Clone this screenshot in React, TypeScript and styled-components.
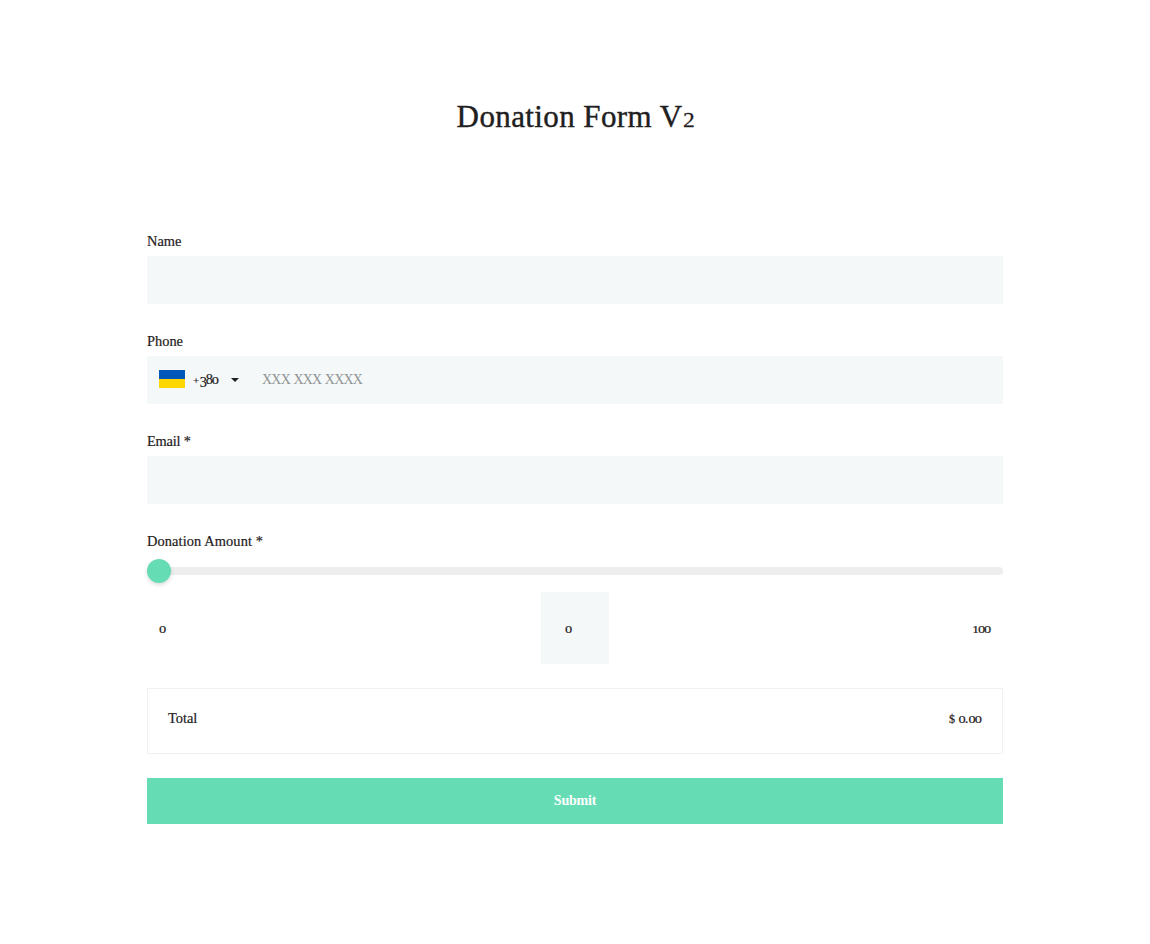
import React from "react";
import styled, { createGlobalStyle } from "styled-components";

const GlobalStyle = createGlobalStyle`
  * { box-sizing: border-box; }
  body {
    margin: 0;
    background: #fff;
    color: #1f2021;
    font-family: "Liberation Serif", "Times New Roman", serif;
    font-size: 14.4px;
    line-height: 20px;
  }
`;

const Page = styled.main`
  width: 856px;
  margin: 0 auto;
  padding-top: 97px;
`;

const Title = styled.h1`
  margin: 0 0 94px;
  padding-left: 2px;
  text-align: center;
  font-size: 31px;
  font-weight: 400;
  line-height: 40px;
  letter-spacing: 0.4px;
  -webkit-text-stroke: 0.4px currentColor;
`;

const Field = styled.section<{ $gap?: number }>`
  display: flex;
  flex-direction: column;
  gap: 5px;
  margin-bottom: ${(p) => p.$gap ?? 27}px;
`;

const Text = styled.span<{ $spacing?: number }>`
  letter-spacing: ${(p) => p.$spacing ?? 0}px;
  -webkit-text-stroke: 0.2px currentColor;
`;

const InputBox = styled.div`
  display: flex;
  align-items: center;
  height: 48px;
  padding: 0 12px;
  background: #f4f8f9;
`;

const Flag = styled.svg`
  display: block;
  width: 26px;
  height: 18px;
  margin: 0 8px 2px 0;
`;

const DialCode = styled.div`
  width: 38px;
  padding-bottom: 2px;
  white-space: nowrap;
`;

const Plus = styled.span`
  margin-right: 1px;
  font-size: 11px;
`;

const Caret = styled.svg`
  display: block;
  width: 8px;
  height: 4px;
  margin-right: 23px;
`;

const Placeholder = styled.span`
  color: #919495;
  font-size: 14px;
  letter-spacing: -0.76px;
  word-spacing: 0.6px;
`;

const SliderRow = styled.div`
  display: flex;
  align-items: center;
  height: 24px;
  margin-top: 3px;
`;

const Track = styled.div`
  display: flex;
  align-items: center;
  width: 100%;
  height: 8px;
  border-radius: 4px;
  background: #eee;
`;

const Thumb = styled.div`
  width: 24px;
  height: 24px;
  border-radius: 50%;
  background: #66dcb5;
  box-shadow: 0 2px 4px rgba(0, 0, 0, 0.14);
`;

const Range = styled.div`
  display: grid;
  grid-template-columns: 1fr 68px 1fr;
  align-items: center;
  height: 72px;
  margin-top: 4px;
  padding: 0 12px;
`;

const RangeEnd = styled.div<{ $align?: string }>`
  padding-bottom: 1px;
  text-align: ${(p) => p.$align ?? "left"};
`;

const Amount = styled.div`
  display: flex;
  align-items: center;
  height: 72px;
  padding: 0 0 1px 24px;
  background: #f4f8f9;
`;

const Total = styled.section`
  display: flex;
  justify-content: space-between;
  height: 66px;
  margin-bottom: 24px;
  padding: 19px 20px;
  border: 1px solid #f1f1f1;
`;

const Currency = styled.span`
  font-size: 12px;
`;

const Submit = styled.button`
  display: block;
  width: 100%;
  height: 46px;
  padding: 0;
  border: 0;
  background: #66dcb5;
  color: #fff;
  font: bold 14px/20px "Liberation Serif", "Times New Roman", serif;
  letter-spacing: -0.2px;
`;

// Old-style figures: 0–2 sit at x-height, 3–5, 7 and 9 drop below the baseline.
const Digit = styled.span<{ $short: boolean; $drop: boolean; $tight?: boolean }>`
  display: inline-block;
  line-height: 1;
  transform-origin: 0 0.837em;
  transform: ${(p) => (p.$short ? "scaleY(0.65)" : p.$drop ? "translateY(0.2em)" : "none")};
  margin-right: ${(p) => (p.$tight ? "-0.06em" : "0")};
`;

const TitleDigit = styled(Digit)`
  margin: 0 -4px 0 1px;
  transform: scale(0.76, 0.68);
`;

const Figures = ({ value, tight }: { value: string; tight?: boolean }) => (
  <>
    {value.split("").map((c, i) =>
      /\d/.test(c) ? (
        <Digit
          key={i}
          $short={"012".includes(c)}
          $drop={"34579".includes(c)}
          $tight={tight && i < value.length - 1}
        >
          {c}
        </Digit>
      ) : (
        c
      )
    )}
  </>
);

export default function App() {
  return (
    <>
      <GlobalStyle />
      <Page>
        <Title>
          Donation Form V<TitleDigit $short $drop={false}>2</TitleDigit>
        </Title>
        <Field>
          <Text>Name</Text>
          <InputBox />
        </Field>
        <Field>
          <Text>Phone</Text>
          <InputBox>
            <Flag viewBox="0 0 26 18">
              <rect width="26" height="18" fill="#ffd700" />
              <rect width="26" height="9" fill="#0057b8" />
            </Flag>
            <DialCode>
              <Text $spacing={-0.4}>
                <Plus>+</Plus>
                <Figures value="380" tight />
              </Text>
            </DialCode>
            <Caret viewBox="0 0 8 4">
              <path d="M0 0h8L4 4z" fill="#1f2021" />
            </Caret>
            <Placeholder>XXX XXX XXXX</Placeholder>
          </InputBox>
        </Field>
        <Field>
          <Text $spacing={-0.2}>Email *</Text>
          <InputBox />
        </Field>
        <Field $gap={24}>
          <Text $spacing={0.1}>Donation Amount *</Text>
          <SliderRow>
            <Track>
              <Thumb />
            </Track>
          </SliderRow>
          <Range>
            <RangeEnd>
              <Text>
                <Figures value="0" />
              </Text>
            </RangeEnd>
            <Amount>
              <Text>
                <Figures value="0" />
              </Text>
            </Amount>
            <RangeEnd $align="right">
              <Text $spacing={-0.3}>
                <Figures value="100" tight />
              </Text>
            </RangeEnd>
          </Range>
        </Field>
        <Total>
          <Text>Total</Text>
          <Text>
            <Currency>$</Currency> <Figures value="0.00" tight />
          </Text>
        </Total>
        <Submit type="button">Submit</Submit>
      </Page>
    </>
  );
}
